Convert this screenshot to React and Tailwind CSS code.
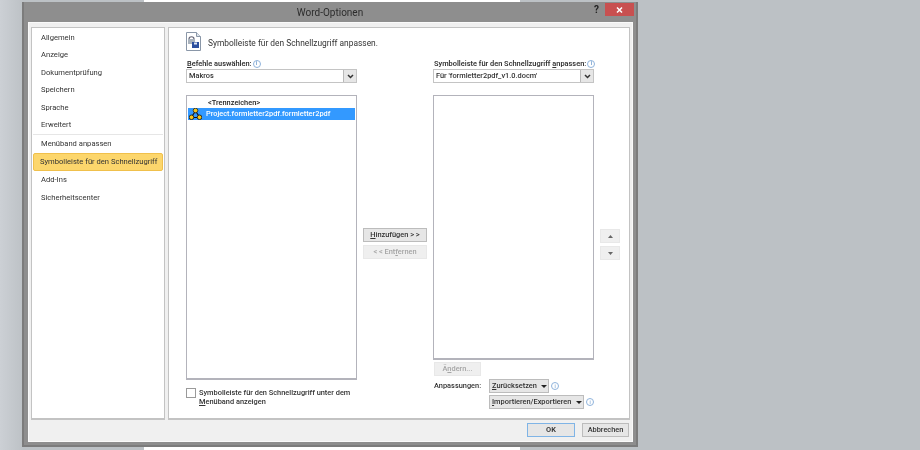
function Info({ className = "" }) {
  return (
    <span className={"inline-flex h-[8px] w-[8px] shrink-0 items-center justify-center rounded-full border border-[#8fb3dc] text-[5px] leading-none text-[#5b8fc7] " + className}>
      i
    </span>
  );
}

function Chevron() {
  return (
    <svg width="7" height="5" viewBox="0 0 7 5" fill="none" stroke="#333" strokeWidth="1.5">
      <path d="M1 1l2.500 2.500L6 1" />
    </svg>
  );
}

function Caret() {
  return (
    <svg width="6" height="3" viewBox="0 0 6 3" fill="#222" className="shrink-0">
      <path d="M0 0h6L3 3z" />
    </svg>
  );
}

function Select({ value }) {
  return (
    <div className="flex h-[14px] items-center justify-between border border-[#c4c4c4] bg-white pl-[2px] text-[7.4px] font-medium text-[#333]">
      <span className="whitespace-nowrap">{value}</span>
      <span className="flex h-full w-[13px] items-center justify-center border-l border-[#b9b9b9] bg-[#e6e6e6]">
        <Chevron />
      </span>
    </div>
  );
}

function Btn({ children, disabled, className = "" }) {
  return (
    <div
      className={
        "flex items-center justify-center whitespace-nowrap border text-[7.4px] font-medium " +
        (disabled ? "border-[#e8e8e8] bg-[#efefef] text-[#a5a5a5] " : "border-[#bcbcbc] bg-[#e6e6e6] text-[#333] ") +
        className
      }
    >
      {children}
    </div>
  );
}

const navTop = ["Allgemein", "Anzeige", "Dokumentprüfung", "Speichern", "Sprache", "Erweitert"];

export default function App() {
  return (
    <div className="relative flex h-[450px] w-[920px] overflow-hidden font-['Roboto',sans-serif] text-[7.6px] leading-[12px] text-[#333] blur-[0.35px]">
      {/* desktop behind the dialog */}
      <div className="w-[144px] bg-[linear-gradient(90deg,#ccd0d5,#bcc1c5_24px)]" />
      <div className="w-[376px] bg-white" />
      <div className="flex-1 bg-[#bcc1c5]" />

      {/* dialog window */}
      <div className="absolute left-[22px] top-[2px] flex h-[445px] w-[616px] flex-col border-b-[2px] border-l-[2px] border-r-[2px] border-[#7c7c7c] bg-[#8e8e8e]">
        <div className="relative flex h-[20px] shrink-0 items-center justify-center pt-[2px] text-[10px] text-[#2c2c2c]">
          Word-Optionen
          <span className="absolute right-[37px] top-[2px] text-[10px] font-bold text-[#222]">?</span>
          <span className="absolute right-[2px] top-[1px] flex h-[13px] w-[29px] items-center justify-center bg-[#c85050]">
            <svg width="7" height="6" viewBox="0 0 7 6" stroke="#fff" strokeWidth="1.5">
              <path d="M1 .5l5 5M6 .5l-5 5" />
            </svg>
          </span>
        </div>

        <div className="mb-[3px] ml-[4px] mr-[3px] flex flex-1 flex-col border border-[#fafafa] bg-[#f0f0f0] px-[2px] pt-[4px]">
          <div className="flex h-[393px] shrink-0 gap-[3px]">
            {/* left navigation */}
            <div className="flex w-[134px] flex-col border border-b-2 border-[#c3c3c3] bg-white px-[1px] pt-[1px]">
              {navTop.map((t) => (
                <div key={t} className="flex h-[17.5px] shrink-0 items-center pl-[8px]">
                  {t}
                </div>
              ))}
              <div className="h-[1px] bg-[#e6e6e6]" />
              <div className="flex h-[17.5px] items-center pl-[8px]">Menüband anpassen</div>
              <div className="flex h-[18px] items-center whitespace-nowrap rounded-[2px] border border-[#f0c04c] bg-[#fcd66c] pl-[6px] text-[#333]">
                Symbolleiste für den Schnellzugriff
              </div>
              <div className="flex h-[19px] items-center pl-[8px]">Add-Ins</div>
              <div className="flex h-[17.5px] items-center pl-[8px]">Sicherheitscenter</div>
            </div>

            {/* main panel */}
            <div className="flex flex-1 flex-col border border-b-2 border-[#c3c3c3] bg-white pl-[17px] pt-[4px]">
              <div className="flex items-center gap-[7px]">
                <svg width="15" height="19" viewBox="0 0 15 19">
                  <path d="M.5.5h10l4 4v14H.5z" fill="#fff" stroke="#8a97a8" />
                  <path d="M10.500.5v4h4" fill="#dfe5ec" stroke="#8a97a8" />
                  <path d="M3 7c0-3 5-3 5 0" fill="none" stroke="#667" strokeWidth="1.200" />
                  <rect x="2" y="7" width="7" height="5" fill="#aab3bd" />
                  <rect x="6" y="10" width="7" height="6" fill="#2c4f9e" />
                  <rect x="8" y="10.500" width="3" height="2" fill="#dfe8f5" />
                </svg>
                <span className="mt-[3px] whitespace-nowrap text-[8.4px]">
                  Symbolleiste für den Schnellzugriff anpassen.
                </span>
              </div>

              <div className="mt-[7px] flex">
                {/* commands column */}
                <div className="flex w-[171px] shrink-0 flex-col">
                  <div className="flex h-[11px] items-center gap-[1px] pl-[1px] text-[7.4px] font-semibold">
                    <span className="whitespace-nowrap"><u>B</u>efehle auswählen:</span>
                    <Info />
                  </div>
                  <Select value="Makros" />
                  <div className="mt-[12px] flex h-[285px] flex-col border border-b-2 border-[#b3b3bb] bg-white px-[1px] text-[7.4px] font-medium">
                    <div className="h-[12px] pl-[20px] leading-[13px] text-[#222]">&lt;Trennzeichen&gt;</div>
                    <div className="flex h-[12px] items-center gap-[4px] whitespace-nowrap bg-[#3399ff] pl-[1px] text-white">
                      <svg width="13" height="12" viewBox="0 0 13 12" className="shrink-0">
                        <path d="M6.500 3L2.500 9M6.500 3l4 6M2.500 9.500h8" stroke="#111" strokeWidth="1.200" />
                        <circle cx="6.500" cy="2.500" r="2.300" fill="#f5c518" stroke="#222" strokeWidth=".8" />
                        <circle cx="2.500" cy="9.300" r="2.300" fill="#f5c518" stroke="#111" strokeWidth=".8" />
                        <circle cx="10.500" cy="9.300" r="2.300" fill="#f5c518" stroke="#111" strokeWidth=".8" />
                      </svg>
                      Project.formletter2pdf.formletter2pdf
                    </div>
                  </div>
                  <div className="mt-[8px] flex gap-[3px]">
                    <div className="h-[10px] w-[10px] shrink-0 border border-[#9a9a9a] bg-white" />
                    <div className="whitespace-nowrap text-[7.4px] font-medium [line-height:9px]">
                      Symbolleiste für den Schnellzugriff unter dem
                      <br />
                      <u>M</u>enüband anzeigen
                    </div>
                  </div>
                </div>

                {/* add / remove */}
                <div className="ml-[6px] flex w-[64px] shrink-0 flex-col gap-[3px] pt-[170px]">
                  <Btn className="h-[14px]"><span><u>H</u>inzufügen &gt; &gt;</span></Btn>
                  <Btn disabled className="h-[14px]"><span>&lt; &lt; Ent<u>f</u>ernen</span></Btn>
                </div>

                {/* toolbar column */}
                <div className="ml-[6px] flex w-[161px] shrink-0 flex-col">
                  <div className="flex h-[11px] items-center gap-[1px] pl-[1px] text-[7.4px] font-semibold">
                    <span className="whitespace-nowrap">Symbolleiste für den Schnellzugriff <u>a</u>npassen:</span>
                    <Info />
                  </div>
                  <Select value="Für 'formletter2pdf_v1.0.docm'" />
                  <div className="mt-[12px] h-[265px] border border-b-2 border-[#b3b3bb] bg-white" />
                  <Btn disabled className="ml-[1px] mt-[2px] h-[14px] w-[47px]"><span>Ä<u>n</u>dern...</span></Btn>
                  <div className="mt-[3px] flex items-center">
                    <span className="w-[56px] shrink-0 pl-[1px] text-[7.4px] font-medium">Anpassungen:</span>
                    <Btn className="h-[14px] w-[60px] justify-start gap-[4px] pl-[2px]"><span><u>Z</u>urücksetzen</span><Caret /></Btn>
                    <Info className="ml-[2px]" />
                  </div>
                  <div className="mt-[2px] flex items-center pl-[56px]">
                    <Btn className="h-[14px] w-[95px] shrink-0 justify-start gap-[5px] pl-[2px]"><span><u>I</u>mportieren/Exportieren</span><Caret /></Btn>
                    <Info className="ml-[2px]" />
                  </div>
                </div>

                {/* move up / down */}
                <div className="ml-[6px] flex w-[20px] shrink-0 flex-col gap-[3px] pt-[171px]">
                  <Btn disabled className="h-[14px]">
                    <svg width="5" height="3" viewBox="0 0 5 3" fill="#666"><path d="M0 3h5L2.500 0z" /></svg>
                  </Btn>
                  <Btn disabled className="h-[14px]">
                    <svg width="5" height="3" viewBox="0 0 5 3" fill="#666"><path d="M0 0h5L2.500 3z" /></svg>
                  </Btn>
                </div>
              </div>
            </div>
          </div>

          {/* footer */}
          <div className="flex justify-end gap-[7px] pr-[1px] pt-[3px]">
            <Btn className="h-[14px] w-[48px] !border-[#7fb4e6] font-semibold">OK</Btn>
            <Btn className="h-[14px] w-[47px]">Abbrechen</Btn>
          </div>
        </div>
      </div>
    </div>
  );
}
